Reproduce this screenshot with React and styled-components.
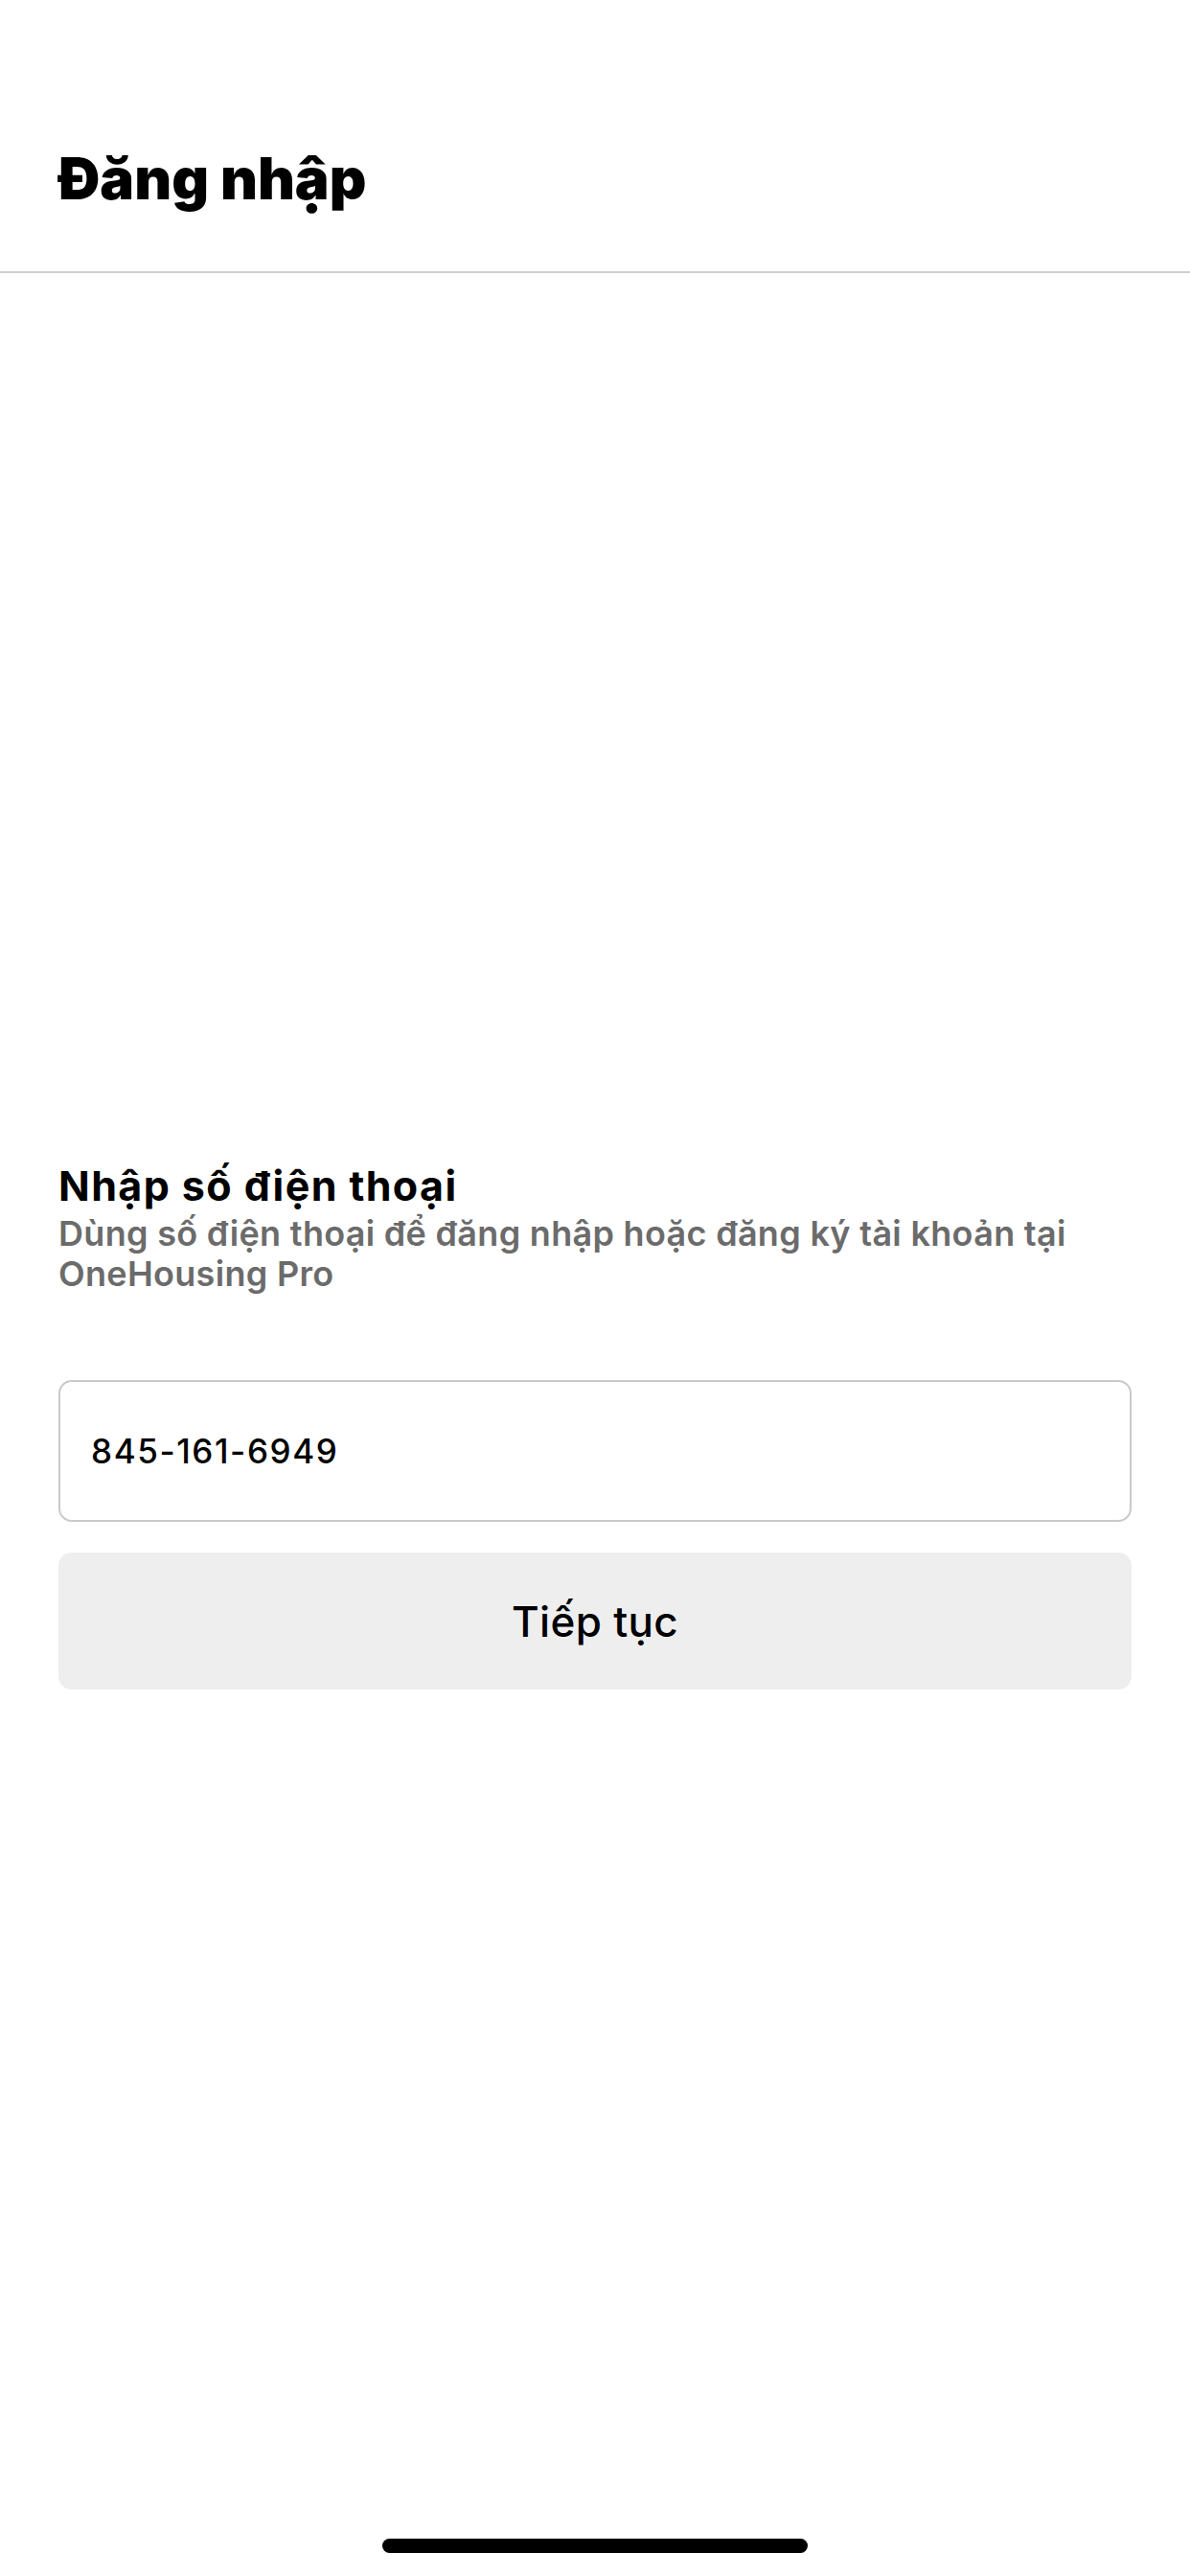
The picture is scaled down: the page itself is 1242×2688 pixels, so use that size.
import React from 'react';
import styled, { createGlobalStyle } from 'styled-components';

const GlobalStyle = createGlobalStyle`
  html, body {
    margin: 0;
    padding: 0;
    background: #ffffff;
  }
  body {
    font-family: Inter, "Noto Sans", "Liberation Sans", sans-serif;
    color: #000;
    -webkit-font-smoothing: antialiased;
  }
`;

const Screen = styled.div`
  width: 1242px;
  height: 2688px;
  display: flex;
  flex-direction: column;
  background: #ffffff;
  overflow: hidden;
`;

const Header = styled.header`
  padding: 150px 61px 61px;
  border-bottom: 2px solid #cfcfcf;
`;

const PageTitle = styled.h1`
  margin: 0;
  font-size: 60px;
  line-height: 72px;
  font-weight: 900;
  letter-spacing: 0;
`;

const Content = styled.main`
  display: flex;
  flex-direction: column;
  padding: 927px 61px 0;
`;

const SectionTitle = styled.h2`
  margin: 0;
  font-size: 43px;
  line-height: 50px;
  font-weight: 700;
  letter-spacing: 1.4px;
`;

const Hint = styled.p`
  margin: 4px 0 0;
  font-size: 36px;
  line-height: 42px;
  font-weight: 600;
  letter-spacing: 0.3px;
  color: #6b6b6b;
`;

const PhoneField = styled.input`
  box-sizing: border-box;
  margin-top: 90px;
  width: 100%;
  height: 148px;
  padding: 0 32px;
  border: 2px solid #c9c9c9;
  border-radius: 14px;
  background: #ffffff;
  font-family: inherit;
  font-size: 35px;
  font-weight: 500;
  letter-spacing: 1.6px;
  color: #000;
  outline: none;
`;

const ContinueButton = styled.button`
  margin-top: 32px;
  width: 100%;
  height: 143px;
  border: none;
  border-radius: 14px;
  background: #eeeeee;
  font-family: inherit;
  font-size: 44px;
  font-weight: 500;
  letter-spacing: 0.3px;
  color: #000;
  cursor: pointer;
`;

const HomeBar = styled.div`
  margin: auto auto 24px;
  width: 444px;
  height: 15px;
  border-radius: 8px;
  background: #000;
`;

export default function App() {
  return (
    <>
      <GlobalStyle />
      <Screen>
        <Header>
          <PageTitle>Đăng nhập</PageTitle>
        </Header>
        <Content>
          <SectionTitle>Nhập số điện thoại</SectionTitle>
          <Hint>Dùng số điện thoại để đăng nhập hoặc đăng ký tài khoản tại OneHousing Pro</Hint>
          <PhoneField type="tel" readOnly value="845-161-6949" />
          <ContinueButton>Tiếp tục</ContinueButton>
        </Content>
        <HomeBar />
      </Screen>
    </>
  );
}
